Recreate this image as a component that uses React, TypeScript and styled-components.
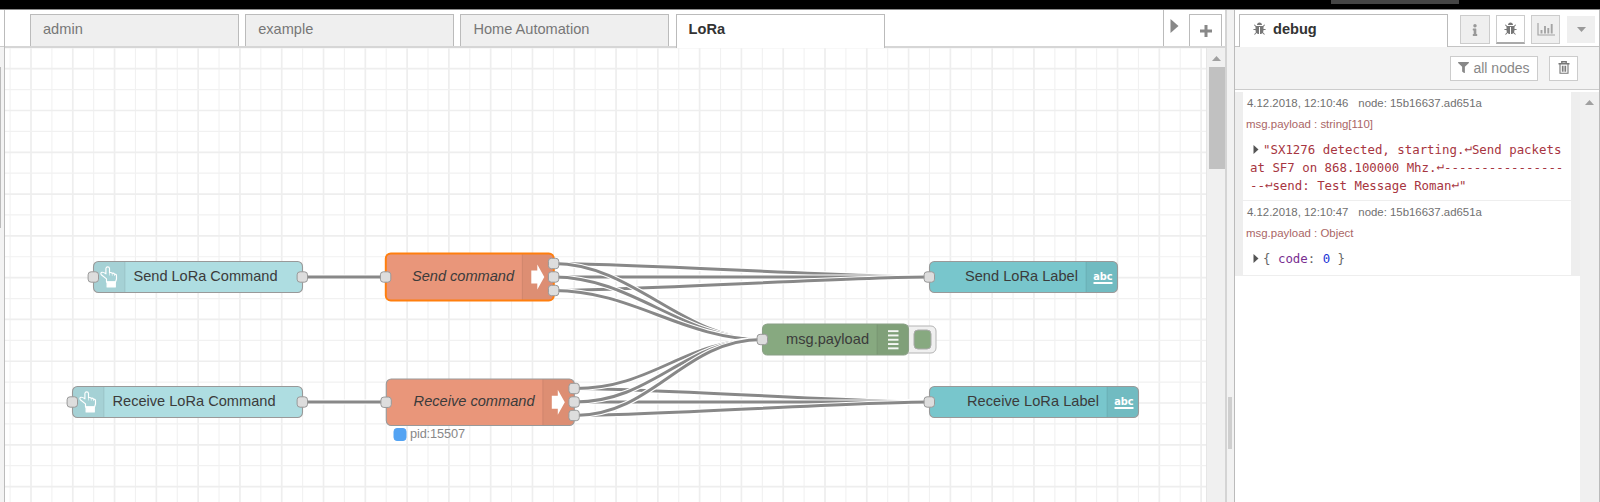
import React from 'react';
import styled, { createGlobalStyle } from 'styled-components';
import { FaInfo, FaFilter } from 'react-icons/fa';

const Global = createGlobalStyle`
  * { box-sizing: border-box; }
  body { margin: 0; background: #fff; font-family: "Liberation Sans", Arial, sans-serif; overflow: hidden; }
`;

const Page = styled.div`
  width: 1600px;
  height: 502px;
  display: flex;
  flex-direction: column;
  background: #fff;
  overflow: hidden;
`;

const Header = styled.div`
  height: 10px;
  flex: none;
  background: #000;
  border-bottom: 1px solid #8a8a8a;
  display: flex;
  justify-content: flex-end;
  padding-right: 141px;
`;

const HeaderButton = styled.div`
  width: 128px;
  height: 4px;
  background: #444;
`;

const Body = styled.div`
  flex: 1;
  display: flex;
  min-height: 0;
`;

const PaletteEdge = styled.div`
  width: 4px;
  flex: none;
  display: flex;
  flex-direction: column;
`;

const PaletteTop = styled.div`
  height: 37px;
  border-bottom: 1px solid #ccc;
`;

const PaletteGap = styled.div`
  height: 20px;
  background: #f3f3f3;
`;

const PaletteScroll = styled.div`
  height: 161px;
  background: #f3f3f3;
  border-left: 1px solid #bbb;
`;

const PaletteRest = styled.div`
  flex: 1;
  background: #f3f3f3;
`;

const Workspace = styled.div`
  width: 1223px;
  flex: none;
  display: flex;
  flex-direction: column;
  border-left: 1px solid #bbb;
  border-right: 2px solid #d4d4d4;
`;

const TabBar = styled.div`
  height: 38px;
  flex: none;
  display: flex;
  align-items: flex-end;
  border-bottom: 2px solid #d6d6d6;
  padding-left: 25px;
`;

const Tab = styled.div<{ $active?: boolean }>`
  width: 209px;
  height: ${(p) => (p.$active ? 34 : 32)}px;
  margin-right: 6.2px;
  margin-bottom: ${(p) => (p.$active ? -2 : 0)}px;
  padding-left: 12px;
  border: 1px solid #bbb;
  border-bottom: 0;
  background: ${(p) => (p.$active ? '#fff' : '#efefef')};
  color: ${(p) => (p.$active ? '#333' : '#777')};
  font-size: 14.6px;
  font-weight: ${(p) => (p.$active ? 'bold' : 'normal')};
  line-height: 29px;
`;

const TabTools = styled.div`
  margin-left: auto;
  height: 36px;
  width: 62px;
  display: flex;
  border-left: 1px solid #bbb;
`;

const ScrollRight = styled.div`
  width: 25px;
  padding: 9px 0 0 6px;
`;

const AddTab = styled.div`
  width: 33px;
  margin-top: 4px;
  border: 1px solid #bbb;
  border-bottom: 0;
  display: flex;
  align-items: center;
  justify-content: center;
`;

const ChartArea = styled.div`
  flex: 1;
  display: flex;
  min-height: 0;
`;

const Canvas = styled.svg`
  width: 1201px;
  height: 454px;
  flex: none;
  display: block;
`;

const ScrollBar = styled.div`
  width: 19px;
  flex: none;
  background: #f0f0f0;
  border-left: 1px solid #e6e6e6;
  display: flex;
  flex-direction: column;
  align-items: flex-end;
`;

const ScrollArrow = styled.div<{ $h: number; $top: number; $right: number }>`
  height: ${(p) => p.$h}px;
  padding-top: ${(p) => p.$top}px;
  padding-right: ${(p) => p.$right}px;
  line-height: 0;
`;

const Thumb = styled.div`
  width: 16px;
  height: 102px;
  background: #c1c1c1;
`;

const Separator = styled.div`
  width: 7px;
  flex: none;
  background: #f2f2f2;
  padding: 387px 0 0 1px;
`;

const Grip = styled.div`
  width: 4px;
  height: 52px;
  background: #cfcfcf;
`;

const Sidebar = styled.div`
  flex: 1;
  display: flex;
  flex-direction: column;
  border-left: 1px solid #bbb;
  border-right: 1px solid #bbb;
`;

const SideTabs = styled.div`
  height: 37px;
  flex: none;
  display: flex;
  padding-left: 4px;
  border-bottom: 1px solid #c4c4c4;
`;

const SideTab = styled.div`
  width: 209px;
  height: 33px;
  margin-top: 4px;
  padding-left: 13px;
  border: 1px solid #bbb;
  border-bottom: 0;
  background: #fff;
  display: flex;
  align-items: center;
  gap: 7px;
  color: #333;
  font-size: 14.6px;
  font-weight: bold;
  padding-bottom: 4px;
`;

const SideButtons = styled.div`
  display: flex;
  padding: 5px 0 0 12px;
`;

const SideButton = styled.div<{ $w: number; $gap?: number; $variant?: 'active' | 'flat' }>`
  width: ${(p) => p.$w}px;
  height: ${(p) => (p.$variant === 'flat' ? 27 : 29)}px;
  margin-top: ${(p) => (p.$variant === 'flat' ? 1 : 0)}px;
  margin-right: ${(p) => p.$gap ?? 0}px;
  border: ${(p) => (p.$variant === 'flat' ? '0' : '1px solid #ccc')};
  border-bottom: ${(p) => (p.$variant === 'active' ? '2px solid #aaa' : p.$variant === 'flat' ? '0' : '1px solid #ccc')};
  background: ${(p) => (p.$variant === 'active' ? '#fff' : '#efefef')};
  display: flex;
  align-items: center;
  justify-content: center;
  color: ${(p) => (p.$variant === 'active' ? '#777' : '#999')};
`;

const ToolRow = styled.div`
  height: 43px;
  flex: none;
  background: #f3f3f3;
  border-bottom: 1px solid #ccc;
  display: flex;
  justify-content: flex-end;
  gap: 11px;
  padding: 9px 21px 0 0;
`;

const ToolButton = styled.div<{ $w: number }>`
  width: ${(p) => p.$w}px;
  height: 25px;
  padding-bottom: 2px;
  border: 1px solid #ccc;
  background: #fff;
  color: #888;
  display: flex;
  align-items: center;
  justify-content: center;
  gap: 4px;
  font-size: 14px;
`;

const DebugPane = styled.div`
  flex: 1;
  display: flex;
  padding-top: 2px;
`;

const MessageList = styled.div`
  flex: 1;
`;

const Message = styled.div<{ $h: number }>`
  height: ${(p) => p.$h}px;
  border-left: 8px solid #eee;
  border-right: 9px solid #eee;
  border-bottom: 1px solid #eee;
  padding: 2px 0 0 3px;
`;

const Meta = styled.div`
  display: flex;
  gap: 10px;
  padding-left: 1px;
  font-size: 11.4px;
  line-height: 19px;
  color: #707070;
`;

const Topic = styled.div`
  font-size: 11.45px;
  line-height: 22px;
  color: #a66;
`;

const Payload = styled.div`
  padding: 6px 0 0 4px;
  font-family: "DejaVu Sans Mono", monospace;
  font-size: 12.4px;
  line-height: 17.8px;
  white-space: pre;
  color: #a73541;
`;

const Return = styled.span`
  line-height: 0;
  vertical-align: 2px;
`;

const Expander = styled.svg`
  width: 6px;
  height: 9px;
  margin: 0 4px 0 3px;
`;

const ObjText = styled.span`
  color: #666;
`;
const Key = styled.span`
  color: #792e90;
`;
const Num = styled.span`
  color: #2033d6;
`;

const PaneScroll = styled.div`
  width: 19px;
  background: #f0f0f0;
  display: flex;
  justify-content: flex-end;
`;

const STEP = 20.895;
const cols = Array.from({ length: 58 }, (_, i) => ({ p: 10.1 + i * STEP, strong: i % 2 === 1 }));
const rows = Array.from({ length: 22 }, (_, i) => ({ p: 47.5 + i * STEP, strong: i % 2 === 0 }));

function wire(x1: number, y1: number, x2: number, y2: number) {
  const c = Math.min(78.4, (x2 - x1) * 0.75);
  return `M${x1} ${y1}C${x1 + c} ${y1} ${x2 - c} ${y2} ${x2} ${y2}`;
}

const wires = [
  wire(303, 277, 386, 277),
  wire(303, 402, 386, 402),
  wire(554, 263.5, 929, 277),
  wire(554, 277, 929, 277),
  wire(554, 290.5, 929, 277),
  wire(554, 263.5, 762, 339.5),
  wire(554, 277, 762, 339.5),
  wire(554, 290.5, 762, 339.5),
  wire(575, 388.5, 929, 402),
  wire(575, 402, 929, 402),
  wire(575, 415.5, 929, 402),
  wire(575, 388.5, 762, 339.5),
  wire(575, 402, 762, 339.5),
  wire(575, 415.5, 762, 339.5),
];

type Icon = 'hand' | 'arrow' | 'abc' | 'debug';
interface NodeDef {
  x: number; y: number; w: number; h: number; fill: string; label: string; tx: number; tw: number;
  icon: Icon; left?: boolean; italic?: boolean; selected?: boolean; outs: number[];
}

const nodes: NodeDef[] = [
  { x: 93.5, y: 261.5, w: 209, h: 31, fill: '#aedde1', label: 'Send LoRa Command', tx: 133.5, tw: 144, icon: 'hand', left: true, outs: [277] },
  { x: 72.5, y: 386.5, w: 230, h: 31, fill: '#aedde1', label: 'Receive LoRa Command', tx: 112.5, tw: 163, icon: 'hand', left: true, outs: [402] },
  { x: 385.8, y: 253.5, w: 168, h: 47, fill: '#e9967a', label: 'Send command', tx: 412, tw: 102, icon: 'arrow', italic: true, selected: true, outs: [263.5, 277, 290.5] },
  { x: 386.3, y: 379, w: 188, h: 46.5, fill: '#e9967a', label: 'Receive command', tx: 413.6, tw: 121, icon: 'arrow', italic: true, outs: [388.5, 402, 415.5] },
  { x: 762.5, y: 324, w: 146, h: 31, fill: '#87a980', label: 'msg.payload', tx: 786, tw: 83, icon: 'debug', outs: [] },
  { x: 929.5, y: 261.5, w: 188, h: 31, fill: '#78c6cc', label: 'Send LoRa Label', tx: 965, tw: 113, icon: 'abc', outs: [] },
  { x: 929.5, y: 386.5, w: 209, h: 31, fill: '#78c6cc', label: 'Receive LoRa Label', tx: 967, tw: 132, icon: 'abc', outs: [] },
];

function NodeIcon({ kind, x, cy }: { kind: Icon; x: number; cy: number }) {
  if (kind === 'hand') {
    return (
      <g transform={`translate(${x + 7} ${cy - 10.5})`} fill="none" stroke="#fff" strokeWidth="1.15" strokeLinejoin="round" strokeLinecap="round">
        <path d="M6 15.6V12.4L.8 8.2Q-.3 6.4 1.4 5.8Q3 5.6 5.4 7.3V2Q5.6.4 7.2.4Q8.9.4 9 2V6.2Q10.8 5.6 11.8 6.8Q13.2 6.4 14 7.6Q16 7.4 16 9.5V12.5L15 15.6Z" />
        <path d="M6.6 15.4h8.2v5h-8.2z" fill="#fff" />
        <path d="M9 6.4v2.2M11.8 7v1.8M14 7.8v1.4" strokeWidth=".6" />
      </g>
    );
  }
  if (kind === 'arrow') {
    return <path d={`M${x + 9} ${cy - 6.5}h6v-6l7 12.5l-7 12.5v-6h-6z`} fill="#fff" />;
  }
  if (kind === 'abc') {
    return (
      <g fill="#fff">
        <text x={x + 7.2} y={cy + 3} fontSize="10.6" fontWeight="bold" fontFamily='"DejaVu Sans"' textLength="19.4" lengthAdjust="spacingAndGlyphs">abc</text>
        <rect x={x + 7.5} y={cy + 5} width="19" height="2" />
      </g>
    );
  }
  return (
    <g fill="#f4f7f3">
      {[0, 1, 2, 3, 4].map((i) => (
        <rect key={i} x={x + 11} y={cy - 9.3 + i * 4.3} width="10.5" height="1.9" />
      ))}
    </g>
  );
}

function Port({ x, y }: { x: number; y: number }) {
  return <rect x={x - 5.4} y={y - 5.2} width="10.4" height="10.4" rx="3" fill="#ddd" stroke="#999" />;
}

function FlowNode({ n }: { n: NodeDef }) {
  const cy = n.y + n.h / 2;
  const iw = 31.5;
  const ix = n.left ? n.x : n.x + n.w - iw;
  const edge = n.left ? n.x + iw : ix;
  return (
    <g>
      {n.icon === 'debug' && (
        <g>
          <rect x="895" y="326" width="41" height="27" rx="5" fill="#f0f0f0" stroke="#b4b4b4" />
          <rect x="914" y="330" width="17" height="19" rx="4" fill="#87a980" stroke="#aaa" />
        </g>
      )}
      <rect x={n.x} y={n.y} width={n.w} height={n.h} rx="5" fill={n.fill} />
      <path
        d={n.left
          ? `M${edge} ${n.y}H${n.x + 5}q-5 0 -5 5V${n.y + n.h - 5}q0 5 5 5H${edge}z`
          : `M${edge} ${n.y}H${n.x + n.w - 5}q5 0 5 5V${n.y + n.h - 5}q0 5 -5 5H${edge}z`}
        fill="#000" fillOpacity=".05"
      />
      <path d={`M${edge} ${n.y}v${n.h}`} stroke="#000" strokeOpacity=".08" />
      <rect x={n.x} y={n.y} width={n.w} height={n.h} rx="5" fill="none"
        stroke={n.selected ? '#ff7f0e' : n.icon === 'debug' ? '#8aa085' : '#999'} strokeWidth={n.selected ? 2 : 1.1} />
      <NodeIcon kind={n.icon} x={ix} cy={cy} />
      <text x={n.tx} y={cy + 4} fontSize="14.6" fill="#3b3b3b" fontStyle={n.italic ? 'italic' : 'normal'} textLength={n.tw}>{n.label}</text>
      <Port x={n.x} y={cy} />
      {n.outs.map((y) => <Port key={y} x={n.x + n.w} y={y} />)}
    </g>
  );
}

function Flow() {
  return (
    <Canvas viewBox="5 48 1201 454" fontFamily="Liberation Sans">
      {cols.map((c) => <path key={c.p} d={`M${c.p} 48V502`} stroke={c.strong ? '#eee' : '#f1f1f1'} strokeWidth={c.strong ? 1.7 : 1.1} />)}
      {rows.map((r) => <path key={r.p} d={`M5 ${r.p + 0.3}H1206`} stroke={r.strong ? '#f1f1f1' : '#eee'} strokeWidth={r.strong ? 1.2 : 1.7} />)}
      {wires.map((d) => (
        <g key={d} fill="none">
          <path d={d} stroke="#fff" strokeWidth="5.2" />
          <path d={d} stroke="#888" strokeWidth="3" />
        </g>
      ))}
      {nodes.map((n) => <FlowNode key={n.label} n={n} />)}
      <rect x="394" y="428.5" width="12" height="12" rx="3" fill="#53a3f3" stroke="#53a3f3" />
      <text x="410" y="438" fontSize="12.8" fill="#888" textLength="55">pid:15507</text>
    </Canvas>
  );
}

const UpArrow = () => <svg width="9" height="5"><path d="M4.5 0L9 5H0z" fill="#a0a0a0" /></svg>;
const Caret = () => <Expander viewBox="0 0 6 9"><path d="M.5 0L5.5 4.5L.5 9z" fill="#555" /></Expander>;
const BugIcon = () => (
  <svg width="13" height="14" viewBox="0 0 1664 1792" fill="#777">
    <path d="M1632 960q0 26-19 45t-45 19h-224q0 171-67 290l208 209q19 19 19 45t-19 45q-18 19-45 19t-45-19l-198-197q-5 5-15 13t-42 28.500-65 36.500-82 29-97 13v-896h-128v896q-51 0-101.500-13.500t-87-33-66-39-43.500-32.500l-15-14-183 207q-20 21-48 21-24 0-43-16-19-18-20.500-44.500t15.500-46.500l202-227q-58-114-58-274h-224q-26 0-45-19t-19-45 19-45 45-19h224v-294l-173-173q-19-19-19-45t19-45 45-19 45 19l173 173h844l173-173q19-19 45-19t45 19 19 45-19 45l-173 173v294h224q26 0 45 19t19 45zm-480-576h-640q0-133 93.500-226.500t226.500-93.500 226.500 93.500 93.500 226.500z" />
  </svg>
);
const ChartIcon = () => (
  <svg width="18" height="13" fill="none" stroke="#a4a4a4">
    <path d="M1 0V12H18" strokeWidth="1.2" />
    <path d="M4.5 10.500V7M8 10.500V3M11.300 10.500V5M14.700 10.500V1" strokeWidth="1.9" />
  </svg>
);
const TrashIcon = () => (
  <svg width="12" height="13" viewBox="0 0 12 13" fill="none" stroke="#777">
    <path d="M.5 2.8h11M3.8 2.5V.8h4.4v1.7" strokeWidth="1.4" />
    <path d="M2 3v9.200h8V3M4.400 4.800v6M6 4.800v6M7.600 4.800v6" strokeWidth="1.1" />
  </svg>
);

export default function App() {
  return (
    <Page>
      <Global />
      <Header><HeaderButton /></Header>
      <Body>
        <PaletteEdge><PaletteTop /><PaletteGap /><PaletteScroll /><PaletteRest /></PaletteEdge>
        <Workspace>
          <TabBar>
            <Tab>admin</Tab>
            <Tab>example</Tab>
            <Tab>Home Automation</Tab>
            <Tab $active>LoRa</Tab>
            <TabTools>
              <ScrollRight><svg width="9" height="14"><path d="M.5 0L8.500 7L.5 14z" fill="#888" /></svg></ScrollRight>
              <AddTab><svg width="12" height="12"><path d="M6 0v12M0 6h12" stroke="#888" strokeWidth="3" /></svg></AddTab>
            </TabTools>
          </TabBar>
          <ChartArea>
            <Flow />
            <ScrollBar>
              <ScrollArrow $h={19} $top={8} $right={4}><UpArrow /></ScrollArrow>
              <Thumb />
            </ScrollBar>
          </ChartArea>
        </Workspace>
        <Separator><Grip /></Separator>
        <Sidebar>
          <SideTabs>
            <SideTab><BugIcon />debug</SideTab>
            <SideButtons>
              <SideButton $w={30} $gap={6}><FaInfo size={12} /></SideButton>
              <SideButton $w={29} $gap={6} $variant="active"><BugIcon /></SideButton>
              <SideButton $w={29} $gap={7}><ChartIcon /></SideButton>
              <SideButton $w={28} $variant="flat"><svg width="9" height="5"><path d="M0 0h9L4.500 5z" fill="#999" /></svg></SideButton>
            </SideButtons>
          </SideTabs>
          <ToolRow>
            <ToolButton $w={88}><FaFilter size={11} />all nodes</ToolButton>
            <ToolButton $w={29}><TrashIcon /></ToolButton>
          </ToolRow>
          <DebugPane>
            <MessageList>
              <Message $h={109}>
                <Meta><span>4.12.2018, 12:10:46</span><span>node: 15b16637.ad651a</span></Meta>
                <Topic>msg.payload : string[110]</Topic>
                <Payload>
                  <Caret />{'"SX1276 detected, starting.'}<Return>↵</Return>{'Send packets\nat SF7 on 868.100000 Mhz.'}<Return>↵</Return>
                  {'----------------\n--'}<Return>↵</Return>{'send: Test Message Roman'}<Return>↵</Return>{'"'}
                </Payload>
              </Message>
              <Message $h={75}>
                <Meta><span>4.12.2018, 12:10:47</span><span>node: 15b16637.ad651a</span></Meta>
                <Topic>msg.payload : Object</Topic>
                <Payload><Caret /><ObjText>{'{ '}<Key>code</Key>: <Num>0</Num>{' }'}</ObjText></Payload>
              </Message>
            </MessageList>
            <PaneScroll><ScrollArrow $h={19} $top={8} $right={5}><UpArrow /></ScrollArrow></PaneScroll>
          </DebugPane>
        </Sidebar>
      </Body>
    </Page>
  );
}
